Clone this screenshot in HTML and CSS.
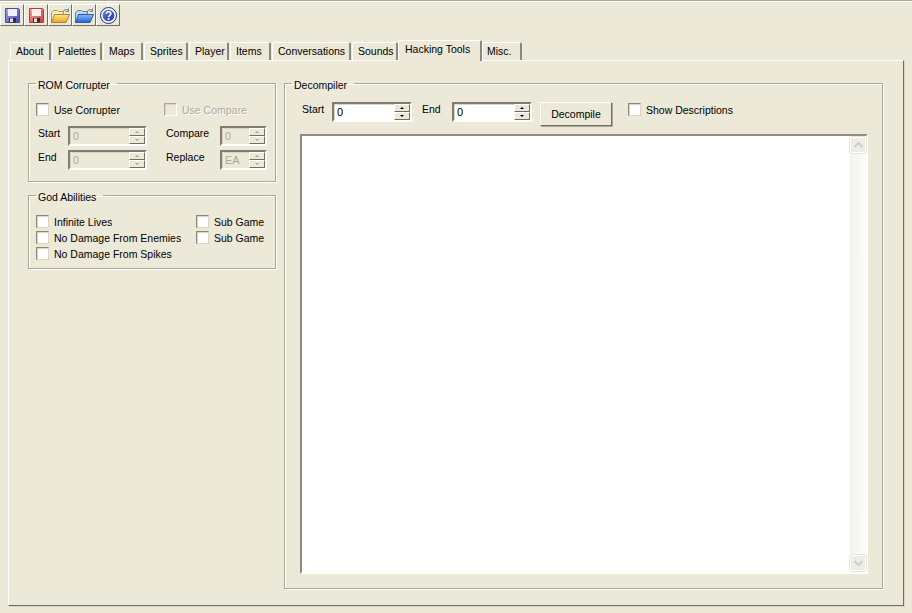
FILE: index.html
```html
<!DOCTYPE html>
<html lang="en">
<head>
    <meta charset="UTF-8">
    <title>Hacking Tools</title>
    <link rel="stylesheet" href="styles.css">
</head>
<body>
    <div class="toolbar">
        <button class="tool">
            <svg width="15" height="15" viewBox="0 0 15 15"><defs><linearGradient id="blueDisk" x1="0" y1="0" x2="1" y2="1"><stop offset="0" stop-color="#a6a8f4"/><stop offset="1" stop-color="#4446b4"/></linearGradient></defs><path d="M.5.5h13l1 1v13H.5z" fill="url(#blueDisk)" stroke="#4a4ca8"/><rect x="3" y="1" width="9" height="7" fill="#f0f0fc"/><rect x="4" y="10" width="7" height="4.500" fill="#2c2c38"/><rect x="5" y="10.500" width="3" height="3.500" fill="#e4e4ea"/></svg>
        </button>
        <button class="tool">
            <svg width="15" height="15" viewBox="0 0 15 15"><defs><linearGradient id="redDisk" x1="0" y1="0" x2="1" y2="1"><stop offset="0" stop-color="#f4a6a6"/><stop offset="1" stop-color="#c83a40"/></linearGradient></defs><path d="M.5.5h13l1 1v13H.5z" fill="url(#redDisk)" stroke="#b43c44"/><rect x="3" y="1" width="9" height="7" fill="#fdeeea"/><rect x="4" y="10" width="7" height="4.500" fill="#38282c"/><rect x="5" y="10.500" width="3" height="3.500" fill="#ece4e4"/></svg>
        </button>
        <button class="tool">
            <svg width="19" height="15" viewBox="0 0 19 15"><defs><linearGradient id="yellowFolder" x1="0" y1="0" x2="0" y2="1"><stop offset="0" stop-color="#fbe58c"/><stop offset="1" stop-color="#eba51c"/></linearGradient></defs><path d="M.5 4.500l2-2h4l1 1h5v3h-8l-4 8z" fill="#f7eeb8" stroke="#b09a50"/><path d="M.5 14.500l3-8h15l-3.500 8z" fill="url(#yellowFolder)" stroke="#a8843a"/><path d="M12 4c1-2.500 3-3 5-2M17.500 .5v3h-3" fill="none" stroke="#6e7c86"/></svg>
        </button>
        <button class="tool">
            <svg width="19" height="15" viewBox="0 0 19 15"><defs><linearGradient id="blueFolder" x1="0" y1="0" x2="0" y2="1"><stop offset="0" stop-color="#8cc0f4"/><stop offset="1" stop-color="#1c62d8"/></linearGradient></defs><path d="M.5 4.500l2-2h4l1 1h5v3h-8l-4 8z" fill="#bcd6f0" stroke="#5a80b0"/><path d="M.5 14.500l3-8h15l-3.500 8z" fill="url(#blueFolder)" stroke="#2c5a9c"/><path d="M12 4c1-2.500 3-3 5-2M17.500 .5v3h-3" fill="none" stroke="#6e7c86"/></svg>
        </button>
        <button class="tool">
            <svg width="17" height="17" viewBox="0 0 17 17"><defs><linearGradient id="helpBall" x1="0" y1="0" x2="1" y2="1"><stop offset="0" stop-color="#5a86e8"/><stop offset="1" stop-color="#1c349c"/></linearGradient></defs><circle cx="8.500" cy="8.500" r="8" fill="#f4f6fc" stroke="#1e2f80"/><circle cx="8.500" cy="8.500" r="5.800" fill="url(#helpBall)"/><path d="M6.300 6.800c0-2.800 4.500-2.800 4.500-.1 0 1.700-2.200 1.700-2.200 3.400" fill="none" stroke="#fff" stroke-width="1.600"/><rect x="7.700" y="11" width="1.800" height="1.800" fill="#fff"/></svg>
        </button>
    </div>

    <div class="tabs">
        <div class="tab tab-about">About</div>
        <div class="tab tab-palettes">Palettes</div>
        <div class="tab tab-maps">Maps</div>
        <div class="tab tab-sprites">Sprites</div>
        <div class="tab tab-player">Player</div>
        <div class="tab tab-items">Items</div>
        <div class="tab tab-conv">Conversations</div>
        <div class="tab tab-sounds">Sounds</div>
        <div class="tab active">Hacking Tools</div>
        <div class="tab tab-misc">Misc.</div>
    </div>

    <div class="panel">
        <div class="left-col">
            <fieldset class="group rom-group">
                <legend>ROM Corrupter</legend>
                <div class="check-row">
                    <label class="check"><span class="box"></span>Use Corrupter</label>
                    <label class="check disabled"><span class="box"></span>Use Compare</label>
                </div>
                <div class="rom-grid">
                    <span class="field-label">Start</span>
                    <div class="spin disabled wide"><span class="spin-value">0</span><div class="spin-btns"><span class="up"></span><span class="down"></span></div></div>
                    <span class="field-label">Compare</span>
                    <div class="spin disabled narrow"><span class="spin-value">0</span><div class="spin-btns"><span class="up"></span><span class="down"></span></div></div>
                    <span class="field-label">End</span>
                    <div class="spin disabled wide"><span class="spin-value">0</span><div class="spin-btns"><span class="up"></span><span class="down"></span></div></div>
                    <span class="field-label">Replace</span>
                    <div class="spin disabled narrow"><span class="spin-value">EA</span><div class="spin-btns"><span class="up"></span><span class="down"></span></div></div>
                </div>
            </fieldset>
            <fieldset class="group god-group">
                <legend>God Abilities</legend>
                <div class="god-grid">
                    <label class="check"><span class="box"></span>Infinite Lives</label>
                    <label class="check"><span class="box"></span>Sub Game</label>
                    <label class="check"><span class="box"></span>No Damage From Enemies</label>
                    <label class="check"><span class="box"></span>Sub Game</label>
                    <label class="check"><span class="box"></span>No Damage From Spikes</label>
                </div>
            </fieldset>
        </div>
        <fieldset class="group decompiler">
            <legend>Decompiler</legend>
            <div class="decomp-row">
                <span class="field-label">Start</span>
                <div class="spin"><span class="spin-value">0</span><div class="spin-btns"><span class="up"></span><span class="down"></span></div></div>
                <span class="field-label end-label">End</span>
                <div class="spin"><span class="spin-value">0</span><div class="spin-btns"><span class="up"></span><span class="down"></span></div></div>
                <button class="push">Decompile</button>
                <label class="check"><span class="box"></span>Show Descriptions</label>
            </div>
            <div class="listbox">
                <div class="scrollbar">
                    <div class="sb-btn"><svg width="9" height="6" viewBox="0 0 9 6"><path d="M0.500 5L4.500 1l4 4" fill="none" stroke="#cfcec4" stroke-width="2"/></svg></div>
                    <div class="sb-track"></div>
                    <div class="sb-btn"><svg width="9" height="6" viewBox="0 0 9 6"><path d="M0.500 1l4 4 4-4" fill="none" stroke="#cfcec4" stroke-width="2"/></svg></div>
                </div>
            </div>
        </fieldset>
    </div>
</body>
</html>
```

FILE: styles.css
```css
* {
    box-sizing: border-box;
}

html, body {
    height: 100%;
}

body {
    margin: 0;
    background-color: #ece9d8;
    font-family: "Liberation Sans", Arial, sans-serif;
    font-size: 10.5px;
    color: #000;
    border-top: 1px solid #aca899;
    box-shadow: inset 0 1px 0 #fff;
    overflow: hidden;
}

.toolbar {
    display: flex;
    height: 22px;
    margin-top: 3px;
}

.tool {
    width: 24px;
    height: 22px;
    margin: 0;
    padding: 0;
    display: flex;
    align-items: center;
    justify-content: center;
    background-color: #ece9d8;
    border: 1px solid;
    border-color: #fff #716f64 #716f64 #fff;
}

.tabs {
    display: flex;
    align-items: flex-end;
    height: 18px;
    margin-top: 16px;
    padding-left: 10px;
}

.tab {
    height: 18px;
    padding: 1px 0 0 5px;
    margin-right: 1px;
    line-height: 14px;
    border-top: 1px solid #fff;
    border-left: 1px solid #fff;
    border-right: 2px solid #8a887c;
    border-radius: 2px 2px 0 0;
    white-space: nowrap;
}

.tab-about { width: 41px; }
.tab-palettes { width: 50px; }
.tab-maps { width: 40px; }
.tab-sprites { width: 44px; }
.tab-player { width: 40px; }
.tab-items { width: 41px; }
.tab-conv { width: 79px; }
.tab-sounds { width: 46px; }
.tab-misc { width: 40px; padding-left: 4px; }

.tab.active {
    width: 84px;
    height: 21px;
    margin: 0 0 -1px -1px;
    padding-left: 6px;
    position: relative;
    z-index: 1;
    background-color: #ece9d8;
}

.panel {
    display: flex;
    gap: 8px;
    width: 896px;
    height: 546px;
    margin-left: 8px;
    padding: 14px 0 0 19px;
    border: 1px solid;
    border-color: #fff #716f64 #716f64 #fff;
    box-shadow: -1px 0 0 #ece9d8, 1px 1px 0 #d8d5c4;
}

.left-col {
    display: flex;
    flex-direction: column;
    gap: 5px;
    width: 248px;
}

.group {
    margin: 0;
    padding: 0;
    min-width: 0;
    border: 1px solid #aca899;
    box-shadow: 1px 1px 0 #fff, inset 1px 1px 0 #fff;
}

.group legend {
    height: 17px;
    padding: 4px 7px 0 2px;
    line-height: 13px;
}

.rom-group {
    height: 107px;
    padding: 11px 7px 0 7px;
}

.god-group {
    height: 82px;
    padding: 11px 7px 0 7px;
}

.check-row {
    display: flex;
}

.check-row .check {
    flex: none;
    width: 128px;
}

.check {
    display: flex;
    align-items: center;
    height: 13px;
    white-space: nowrap;
}

.box {
    flex: none;
    width: 13px;
    height: 13px;
    margin-right: 5px;
    background-color: #fff;
    border: 1px solid #8a887c;
    border-right-color: #d8d5c4;
    border-bottom-color: #d8d5c4;
    box-shadow: inset 1px 1px 0 #d8d5c4;
}

.check.disabled {
    color: #aca899;
    text-shadow: 1px 1px 0 #fff;
}

.check.disabled .box {
    background-color: #ece9d8;
    border-color: #aca899 #fff #fff #aca899;
}

.rom-grid {
    display: grid;
    grid-template-columns: 30px 98px 54px 47px;
    grid-auto-rows: 20px;
    row-gap: 4px;
    margin-top: 10px;
    margin-left: 2px;
}

.field-label {
    padding-top: 1px;
    line-height: 13px;
}

.spin {
    display: flex;
    justify-content: space-between;
    height: 20px;
    padding: 1px 1px 1px 3px;
    background-color: #fff;
    border: 2px solid;
    border-color: #7f7d72 #fff #fff #7f7d72;
    box-shadow: inset 1px 1px 0 #d8d5c4;
    line-height: 15px;
    font-size: 11px;
}

.spin.wide {
    width: 79px;
}

.spin.narrow {
    width: 47px;
}

.spin.disabled {
    background-color: #ece9d8;
    color: #aca899;
}

.spin-btns {
    display: flex;
    flex-direction: column;
    width: 16px;
    margin: -1px -1px -1px 0;
}

.spin-btns span {
    display: flex;
    align-items: center;
    justify-content: center;
    flex: 1;
    background-color: #ece9d8;
    border: 1px solid;
    border-color: #fff #716f64 #716f64 #fff;
}

.spin-btns span::after {
    content: "";
    width: 0;
    height: 0;
    border-left: 2px solid transparent;
    border-right: 2px solid transparent;
}

.spin-btns .up::after {
    border-bottom: 2px solid #000;
}

.spin-btns .down::after {
    border-top: 2px solid #000;
}

.spin.disabled .spin-btns .up::after {
    border-bottom-color: #aca899;
}

.spin.disabled .spin-btns .down::after {
    border-top-color: #aca899;
}

.god-grid {
    display: grid;
    grid-template-columns: 160px 1fr;
    grid-auto-rows: 13px;
    row-gap: 3px;
}

.decompiler {
    flex: none;
    width: 599px;
    height: 514px;
    padding: 10px 14px 0 15px;
}

.decompiler legend {
    margin-left: -8px;
}

.decomp-row {
    display: flex;
    align-items: flex-start;
    height: 32px;
    padding-left: 2px;
}

.decomp-row .field-label {
    width: 30px;
}

.decomp-row .end-label {
    margin-left: 10px;
}

.decomp-row .spin {
    width: 80px;
}

.push {
    width: 72px;
    height: 24px;
    margin: 0 16px 0 8px;
    padding: 0;
    background-color: #ece9d8;
    font: inherit;
    border: 1px solid;
    border-color: #fff #716f64 #716f64 #fff;
    box-shadow: 1px 1px 0 #aca899;
}

.decomp-row .check {
    margin-top: 1px;
}

.listbox {
    display: flex;
    justify-content: flex-end;
    height: 440px;
    background-color: #fff;
    border: 2px solid;
    border-color: #8f8d80 #fff #fff #8f8d80;
}

.scrollbar {
    display: flex;
    flex-direction: column;
    width: 16px;
}

.sb-btn {
    flex: none;
    display: flex;
    align-items: center;
    justify-content: center;
    height: 16px;
    margin: 1px 0;
    background-color: #eeede5;
    border: 1px solid #fff;
    border-radius: 2px;
    box-shadow: 0 0 0 1px #e6e5dc;
}

.sb-track {
    flex: 1;
    background: linear-gradient(to right, #f3f2ec, #fdfdfb);
}
```
